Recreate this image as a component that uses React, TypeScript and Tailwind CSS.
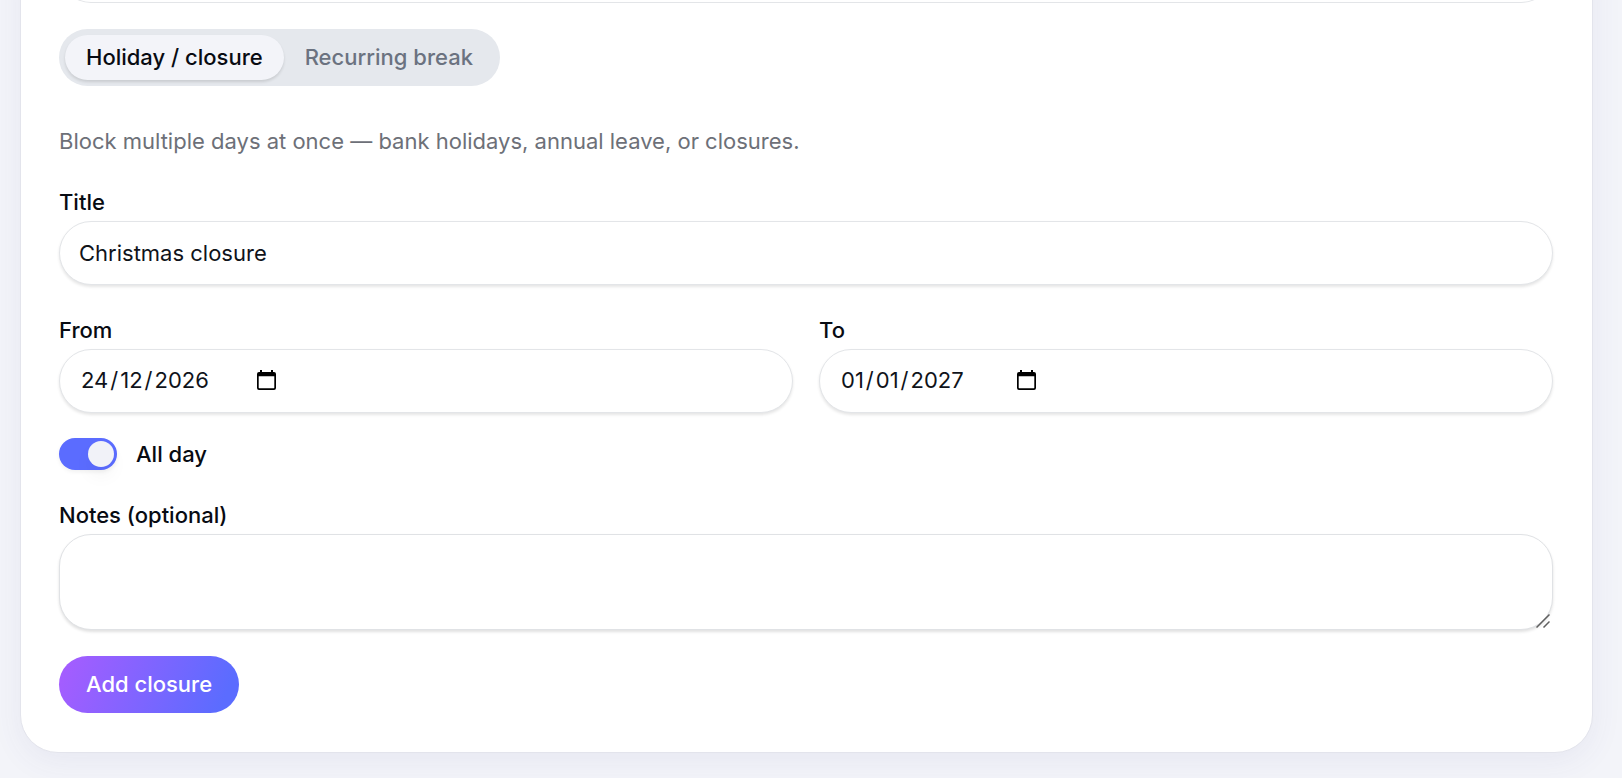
import { useState } from "react";

const inputClass =
  "h-16 w-full rounded-[32px] border border-[#e3e5e8] bg-white px-[19px] text-[22px] text-[#10131a] shadow-[0_2px_3px_rgba(0,0,0,0.10)] outline-none";
const labelClass = "text-[22px] leading-8 font-medium text-[#080b12]";

const dateParts = ["Day", "Month", "Year"];

function CalendarIcon() {
  return (
    <svg viewBox="0 0 19 20" className="h-5 w-[19px]" fill="currentColor" aria-hidden="true">
      <path
        fillRule="evenodd"
        d="M3 0h2v2h9V0h2v2h1a2 2 0 0 1 2 2v14a2 2 0 0 1-2 2H2a2 2 0 0 1-2-2V4a2 2 0 0 1 2-2h1V0ZM1.700 6.300v11.500c0 .3.200.5.500.5h14.600c.3 0 .5-.2.5-.5V6.300H1.700Z"
      />
    </svg>
  );
}

interface DateFieldProps {
  id: string;
  label: string;
  value: string[];
  onChange: (value: string[]) => void;
}

function DateField({ id, label, value, onChange }: DateFieldProps) {
  return (
    <div className="flex flex-col gap-[3px]">
      <label htmlFor={`${id}-Day`} className={labelClass}>
        {label}
      </label>
      <div className="flex h-16 items-center rounded-[32px] border border-[#e3e5e8] bg-white pb-0.5 pl-[19px] shadow-[0_2px_3px_rgba(0,0,0,0.10)]">
        <div className="flex w-[178px] items-center text-[22px] text-[#10131a]">
          {dateParts.map((part, index) => (
            <div key={part} className="flex items-center">
              {index > 0 && <span>/</span>}
              <input
                id={`${id}-${part}`}
                type="text"
                inputMode="numeric"
                aria-label={`${label} ${part.toLowerCase()}`}
                value={value[index]}
                onChange={(event) => onChange(value.map((item, i) => (i === index ? event.target.value : item)))}
                className="field-sizing-content bg-transparent px-0.5 outline-none"
              />
            </div>
          ))}
        </div>
        <button type="button" aria-label={`Choose date: ${label}`} className="text-black">
          <CalendarIcon />
        </button>
      </div>
    </div>
  );
}

export default function App() {
  const [mode, setMode] = useState<"closure" | "break">("closure");
  const [title, setTitle] = useState("Christmas closure");
  const [from, setFrom] = useState(["24", "12", "2026"]);
  const [to, setTo] = useState(["01", "01", "2027"]);
  const [allDay, setAllDay] = useState(true);
  const [notes, setNotes] = useState("");

  const tabClass = (active: boolean) =>
    active
      ? "h-[45px] rounded-full bg-[#f3f4f9] px-[21px] text-[22px] font-medium text-[#080b12] shadow-[0_2px_3px_rgba(0,0,0,0.12)]"
      : "h-[45px] rounded-full px-[21px] text-[22px] font-medium text-[#6b7280]";

  return (
    <main className="min-h-screen overflow-hidden bg-[#f3f4f9] pr-[29px] pb-[25px] pl-5 font-['Inter','Liberation_Sans',sans-serif]">
      <section className="-mt-16 rounded-[38px] border border-[#e3e4ec] bg-white pr-[39px] pb-[39px] pl-[38px] shadow-[0_8px_32px_rgba(70,70,140,0.07)]">
        <div className="h-[66px] rounded-b-[32px] border border-t-0 border-[#e3e5e8]" />

        <div role="tablist" className="mt-[26px] inline-flex h-[57px] items-center rounded-full bg-[#e5e8ed] px-1.5">
          <button type="button" role="tab" aria-selected={mode === "closure"} className={tabClass(mode === "closure")} onClick={() => setMode("closure")}>
            Holiday / closure
          </button>
          <button type="button" role="tab" aria-selected={mode === "break"} className={tabClass(mode === "break")} onClick={() => setMode("break")}>
            Recurring break
          </button>
        </div>

        <form className="mt-[39px]" onSubmit={(event) => event.preventDefault()}>
          <p className="text-[22px] leading-8 text-[#6d7078]">
            Block multiple days at once — bank holidays, annual leave, or closures.
          </p>

          <div className="mt-[29px] flex flex-col gap-[3px]">
            <label htmlFor="title" className={labelClass}>
              Title
            </label>
            <input id="title" type="text" value={title} onChange={(event) => setTitle(event.target.value)} className={inputClass} />
          </div>

          <div className="mt-[29px] grid grid-cols-2 gap-[26px]">
            <DateField id="from" label="From" value={from} onChange={setFrom} />
            <DateField id="to" label="To" value={to} onChange={setTo} />
          </div>

          <div className="mt-[25px] flex items-center gap-[19px]">
            <input
              id="all-day"
              type="checkbox"
              role="switch"
              checked={allDay}
              onChange={(event) => setAllDay(event.target.checked)}
              className="flex h-8 w-[58px] appearance-none items-center rounded-full bg-[#d5d8de] px-[3px] shadow-[0_2px_4px_rgba(0,0,0,0.06)] before:size-[26px] before:rounded-full before:bg-[#f1f2f8] before:shadow-[0_10px_18px_rgba(0,0,0,0.04)] checked:justify-end checked:bg-[#5b6cff]"
            />
            <label htmlFor="all-day" className={labelClass}>
              All day
            </label>
          </div>

          <div className="mt-[29px] flex flex-col gap-[3px]">
            <label htmlFor="notes" className={labelClass}>
              Notes (optional)
            </label>
            <div className="relative">
              <textarea
                id="notes"
                value={notes}
                onChange={(event) => setNotes(event.target.value)}
                className="block h-24 w-full resize-none rounded-[32px] border border-[#e0e2e5] bg-white px-[19px] py-3 text-[22px] shadow-[0_2px_3px_rgba(0,0,0,0.12)] outline-none"
              />
              <svg viewBox="0 0 14 14" className="absolute right-[3px] bottom-[2px] size-3.5" stroke="#5f5f5f" strokeWidth="1.500" aria-hidden="true">
                <path d="M.5 13.500 13.500.5M7.500 13.500l6-6" />
              </svg>
            </div>
          </div>

          <button
            type="submit"
            className="mt-[26px] h-[57px] rounded-full bg-linear-[112deg] from-[#a85cff] to-[#5b6cff] to-90% px-[27px] text-[22px] font-medium text-white"
          >
            Add closure
          </button>
        </form>
      </section>
    </main>
  );
}
